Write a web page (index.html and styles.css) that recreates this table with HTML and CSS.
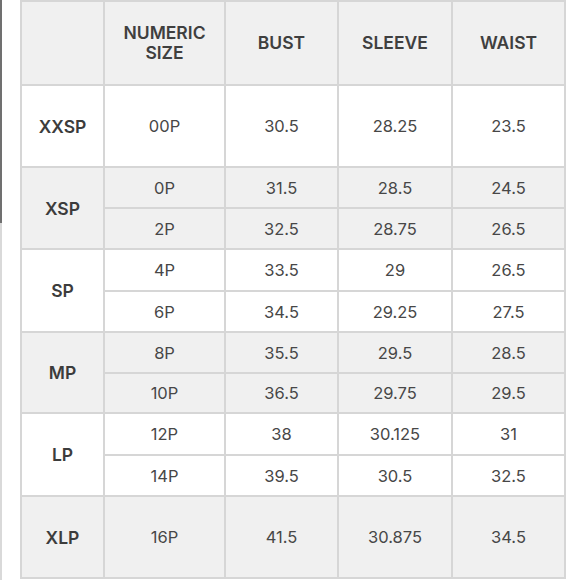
FILE: index.html
```html
<!DOCTYPE html>
<html>
<head>
<meta charset="utf-8">
<link rel="stylesheet" href="styles.css">
</head>
<body>
<div class="page">
  <div class="edge"><div class="edge-dark"></div><div class="edge-light"></div></div>
  <div class="chart">
    <div class="c head"></div>
    <div class="c head">NUMERIC<br>SIZE</div>
    <div class="c head">BUST</div>
    <div class="c head">SLEEVE</div>
    <div class="c head">WAIST</div>

    <div class="c lab">XXSP</div>
    <div class="c">00P</div><div class="c">30.5</div><div class="c">28.25</div><div class="c">23.5</div>

    <div class="c lab g span2">XSP</div>
    <div class="c g">0P</div><div class="c g">31.5</div><div class="c g">28.5</div><div class="c g">24.5</div>
    <div class="c g">2P</div><div class="c g">32.5</div><div class="c g">28.75</div><div class="c g">26.5</div>

    <div class="c lab span2">SP</div>
    <div class="c">4P</div><div class="c">33.5</div><div class="c">29</div><div class="c">26.5</div>
    <div class="c">6P</div><div class="c">34.5</div><div class="c">29.25</div><div class="c">27.5</div>

    <div class="c lab g span2">MP</div>
    <div class="c g">8P</div><div class="c g">35.5</div><div class="c g">29.5</div><div class="c g">28.5</div>
    <div class="c g">10P</div><div class="c g">36.5</div><div class="c g">29.75</div><div class="c g">29.5</div>

    <div class="c lab span2">LP</div>
    <div class="c">12P</div><div class="c">38</div><div class="c">30.125</div><div class="c">31</div>
    <div class="c">14P</div><div class="c">39.5</div><div class="c">30.5</div><div class="c">32.5</div>

    <div class="c lab g">XLP</div>
    <div class="c g">16P</div><div class="c g">41.5</div><div class="c g">30.875</div><div class="c g">34.5</div>
  </div>
</div>
</body>
</html>
```
FILE: styles.css
```css
html, body {
  margin: 0;
  padding: 0;
  background: #ffffff;
}
.page {
  display: flex;
  align-items: flex-start;
  width: 580px;
  height: 580px;
  overflow: hidden;
}
.edge {
  width: 2px;
  height: 580px;
  display: flex;
  flex-direction: column;
  margin-right: 18px;
}
.edge-dark {
  height: 223px;
  background: #707070;
}
.edge-light {
  flex: 1;
  background: #d9d9d9;
}
.chart {
  display: grid;
  grid-template-columns: 81px 119px 111px 112px 111px;
  grid-template-rows: 82px 80px 39px 39px 40px 39px 39px 38px 40px 39px 80px;
  gap: 2px;
  padding: 2px;
  background: #d6d6d6;
  font-family: Inter, "Liberation Sans", sans-serif;
  color: #474747;
}
.c {
  background: #ffffff;
  display: flex;
  align-items: center;
  justify-content: center;
  text-align: center;
  font-size: 16.5px;
  font-weight: 400;
}
.c.g, .c.head {
  background: #f0f0f0;
}
.head {
  font-weight: 600;
  font-size: 17.5px;
  line-height: 20px;
  color: #3f3f3f;
}
.lab {
  font-weight: 600;
  font-size: 17.5px;
  color: #3c3c3c;
}
.span2 {
  grid-row: span 2;
}
```
